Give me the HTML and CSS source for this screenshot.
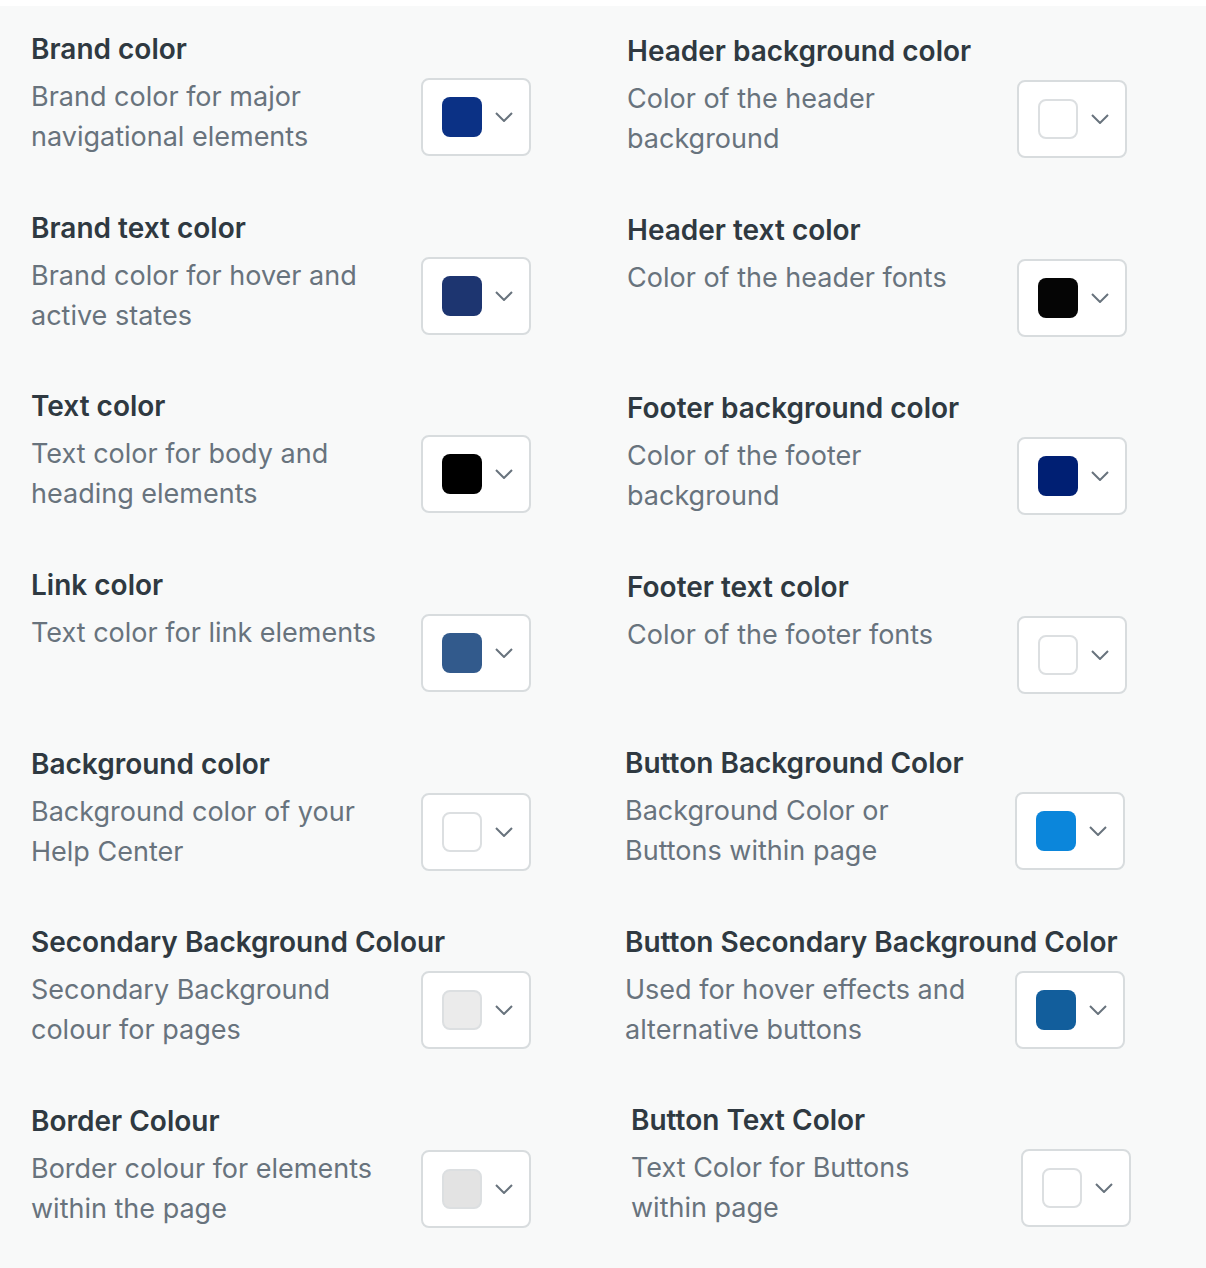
FILE: index.html
```html
<!DOCTYPE html>
<html lang="en">

<head>
	<meta charset="utf-8">
	<title>Theme settings - Colors</title>
	<link rel="stylesheet" href="styles.css">
</head>

<body>
	<div class="panel">
		<div class="col col-left">
			<div class="setting">
				<h3 class="setting-title">Brand color</h3>
				<div class="setting-row">
					<p class="setting-desc">Brand color for major navigational elements</p>
					<button class="picker" type="button"><span class="swatch" style="background:#0b3185"></span><svg class="chevron" viewBox="0 0 18 10"><polyline points="1,1 9,9 17,1" /></svg></button>
				</div>
			</div>
			<div class="setting">
				<h3 class="setting-title">Brand text color</h3>
				<div class="setting-row">
					<p class="setting-desc">Brand color for hover and active states</p>
					<button class="picker" type="button"><span class="swatch" style="background:#1d3570"></span><svg class="chevron" viewBox="0 0 18 10"><polyline points="1,1 9,9 17,1" /></svg></button>
				</div>
			</div>
			<div class="setting">
				<h3 class="setting-title">Text color</h3>
				<div class="setting-row">
					<p class="setting-desc">Text color for body and heading elements</p>
					<button class="picker" type="button"><span class="swatch" style="background:#000000"></span><svg class="chevron" viewBox="0 0 18 10"><polyline points="1,1 9,9 17,1" /></svg></button>
				</div>
			</div>
			<div class="setting">
				<h3 class="setting-title">Link color</h3>
				<div class="setting-row">
					<p class="setting-desc">Text color for link elements</p>
					<button class="picker" type="button"><span class="swatch" style="background:#325a8c"></span><svg class="chevron" viewBox="0 0 18 10"><polyline points="1,1 9,9 17,1" /></svg></button>
				</div>
			</div>
			<div class="setting">
				<h3 class="setting-title">Background color</h3>
				<div class="setting-row">
					<p class="setting-desc">Background color of your Help Center</p>
					<button class="picker" type="button"><span class="swatch swatch-light" style="background:#ffffff"></span><svg class="chevron" viewBox="0 0 18 10"><polyline points="1,1 9,9 17,1" /></svg></button>
				</div>
			</div>
			<div class="setting">
				<h3 class="setting-title">Secondary Background Colour</h3>
				<div class="setting-row">
					<p class="setting-desc">Secondary Background colour for pages</p>
					<button class="picker" type="button"><span class="swatch swatch-light" style="background:#ebebeb"></span><svg class="chevron" viewBox="0 0 18 10"><polyline points="1,1 9,9 17,1" /></svg></button>
				</div>
			</div>
			<div class="setting">
				<h3 class="setting-title">Border Colour</h3>
				<div class="setting-row">
					<p class="setting-desc">Border colour for elements within the page</p>
					<button class="picker" type="button"><span class="swatch swatch-light" style="background:#e3e3e3"></span><svg class="chevron" viewBox="0 0 18 10"><polyline points="1,1 9,9 17,1" /></svg></button>
				</div>
			</div>
		</div>

		<div class="col col-right">
			<div class="setting">
				<h3 class="setting-title">Header background color</h3>
				<div class="setting-row">
					<p class="setting-desc">Color of the header background</p>
					<button class="picker" type="button"><span class="swatch swatch-light" style="background:#ffffff"></span><svg class="chevron" viewBox="0 0 18 10"><polyline points="1,1 9,9 17,1" /></svg></button>
				</div>
			</div>
			<div class="setting">
				<h3 class="setting-title">Header text color</h3>
				<div class="setting-row">
					<p class="setting-desc">Color of the header fonts</p>
					<button class="picker" type="button"><span class="swatch" style="background:#050505"></span><svg class="chevron" viewBox="0 0 18 10"><polyline points="1,1 9,9 17,1" /></svg></button>
				</div>
			</div>
			<div class="setting">
				<h3 class="setting-title">Footer background color</h3>
				<div class="setting-row">
					<p class="setting-desc">Color of the footer background</p>
					<button class="picker" type="button"><span class="swatch" style="background:#001f73"></span><svg class="chevron" viewBox="0 0 18 10"><polyline points="1,1 9,9 17,1" /></svg></button>
				</div>
			</div>
			<div class="setting">
				<h3 class="setting-title">Footer text color</h3>
				<div class="setting-row">
					<p class="setting-desc">Color of the footer fonts</p>
					<button class="picker" type="button"><span class="swatch swatch-light" style="background:#ffffff"></span><svg class="chevron" viewBox="0 0 18 10"><polyline points="1,1 9,9 17,1" /></svg></button>
				</div>
			</div>

			<div class="setting setting-btn setting-first-btn">
				<h3 class="setting-title">Button Background Color</h3>
				<div class="setting-row">
					<p class="setting-desc">Background Color or Buttons within page</p>
					<button class="picker" type="button"><span class="swatch" style="background:#0b86db"></span><svg class="chevron" viewBox="0 0 18 10"><polyline points="1,1 9,9 17,1" /></svg></button>
				</div>
			</div>
			<div class="setting setting-btn">
				<h3 class="setting-title">Button Secondary Background Color</h3>
				<div class="setting-row">
					<p class="setting-desc">Used for hover effects and alternative buttons</p>
					<button class="picker" type="button"><span class="swatch" style="background:#125e9c"></span><svg class="chevron" viewBox="0 0 18 10"><polyline points="1,1 9,9 17,1" /></svg></button>
				</div>
			</div>
			<div class="setting setting-btn-text">
				<h3 class="setting-title">Button Text Color</h3>
				<div class="setting-row">
					<p class="setting-desc">Text Color for Buttons within page</p>
					<button class="picker" type="button"><span class="swatch swatch-light" style="background:#ffffff"></span><svg class="chevron" viewBox="0 0 18 10"><polyline points="1,1 9,9 17,1" /></svg></button>
				</div>
			</div>
		</div>
	</div>
</body>

</html>
```
FILE: styles.css
```css
body {
	margin: 0;
	background: #ffffff;
	font-family: Inter, "Noto Sans", sans-serif;
	color: #2f3941;
}

.panel {
	margin-top: 6px;
	background: #f8f9f9;
	display: grid;
	grid-template-columns: 596px 1fr;
	min-height: 1262px;
}

.col-left {
	padding: 26px 0 0 31px;
}

.col-right {
	padding: 28px 0 0 31px;
}

.setting {
	margin-bottom: 53.67px;
}

.setting-btn {
	margin-left: -2px;
}

.setting-first-btn {
	margin-top: -2.7px;
}

.setting-btn-text {
	margin-left: 4px;
	margin-top: -0.6px;
}

.setting-title {
	margin: 0 0 11px;
	font-size: 28px;
	line-height: 34px;
	font-weight: 600;
	color: #2f3941;
	white-space: nowrap;
}

.setting-row {
	display: grid;
	grid-template-columns: 352px 110px;
	column-gap: 38px;
	align-items: start;
	min-height: 80px;
}

.setting-desc {
	margin: 0;
	font-size: 27px;
	line-height: 40px;
	color: #68737d;
}

.picker {
	margin-top: 1px;
	width: 110px;
	height: 78px;
	padding: 0 0 0 19px;
	display: flex;
	align-items: center;
	gap: 13px;
	background: #ffffff;
	border: 2px solid #d8dcde;
	border-radius: 8px;
	box-sizing: border-box;
	cursor: pointer;
}

.swatch {
	display: block;
	width: 40px;
	height: 40px;
	border-radius: 8px;
	box-sizing: border-box;
}

.swatch-light {
	border: 2px solid #dcdfe1;
}

.chevron {
	width: 18px;
	height: 10px;
	fill: none;
	stroke: #68737d;
	stroke-width: 2;
}
```
